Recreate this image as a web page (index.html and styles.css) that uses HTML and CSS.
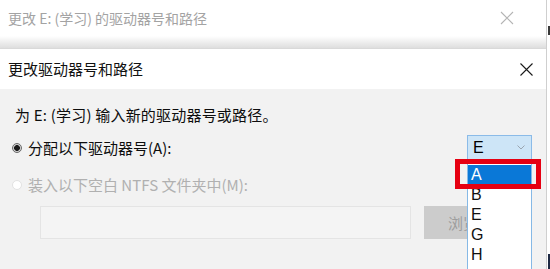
FILE: index.html
```html
<!DOCTYPE html>
<html lang="zh-CN">
<head>
<meta charset="utf-8">
<title>更改驱动器号和路径</title>
<link rel="stylesheet" href="styles.css">
</head>
<body>
<div class="screen">
  <div class="windows">
    <div class="back-bar">
      <span class="back-title">更改 E: (学习) 的驱动器号和路径</span>
      <svg class="x-icon" width="14" height="14" viewBox="0 0 14 14"><path d="M1 1L13 13M13 1L1 13" stroke="#b4b4b4" stroke-width="1.1" fill="none"/></svg>
    </div>
    <div class="band"></div>
    <div class="front">
      <div class="front-bar">
        <span class="front-title">更改驱动器号和路径</span>
        <svg class="x-icon" width="13" height="13" viewBox="0 0 13 13"><path d="M0.5 0.5L12.5 12.5M12.5 0.5L0.5 12.5" stroke="#1a1a1a" stroke-width="1.1" fill="none"/></svg>
      </div>
      <div class="front-body">
        <p class="intro">为 E: (学习) 输入新的驱动器号或路径。</p>
        <div class="row-assign">
          <label class="opt"><span class="radio checked"></span>分配以下驱动器号(A):</label>
          <div class="combo">
            <span class="combo-value">E</span>
            <svg width="8" height="5" viewBox="0 0 8 5"><path d="M0.5 0.5L4 4L7.5 0.5" stroke="#9aa5b0" stroke-width="1" fill="none"/></svg>
          </div>
        </div>
        <label class="opt disabled row-mount"><span class="radio"></span>装入以下空白 NTFS 文件夹中(M):</label>
        <div class="row-path">
          <div class="path-box"></div>
          <div class="browse">浏览(B)...</div>
        </div>
      </div>
    </div>
  </div>
  <div class="edge"><span class="mark-top"></span><span class="mark-bottom"></span></div>

  <ul class="dropdown">
    <li class="sel">A</li>
    <li>B</li>
    <li>E</li>
    <li>G</li>
    <li>H</li>
  </ul>
  <div class="highlight-box"></div>
</div>
</body>
</html>
```
FILE: styles.css
```css
html, body {
  margin: 0;
  padding: 0;
  background: #ffffff;
}
body {
  font-family: "Noto Sans CJK SC", "Noto Sans", "Liberation Sans", sans-serif;
  font-size: 15px;
  color: #1a1a1a;
}
.screen {
  position: relative;
  display: flex;
  width: 550px;
  height: 269px;
  overflow: hidden;
}
.windows {
  flex: none;
  width: 546px;
  display: flex;
  flex-direction: column;
}
.edge {
  position: relative;
  flex: 1;
  border-left: 1px solid #cfcfcf;
  background: #ffffff;
}
.mark-top {
  position: absolute;
  left: 1px;
  top: 26px;
  width: 2px;
  height: 9px;
  background: #3a3a3a;
}
.mark-bottom {
  position: absolute;
  left: 1px;
  top: 254px;
  width: 2px;
  height: 15px;
  background: #1f2a44;
}
.back-bar {
  height: 36px;
  display: flex;
  align-items: center;
  justify-content: space-between;
  padding: 0 32px 0 8px;
  background: #ffffff;
}
.back-title {
  font-size: 14px;
  color: #a3a3a3;
  line-height: 20px;
}
.band {
  height: 12px;
  background: linear-gradient(to bottom, #ffffff 0%, #f0f0f0 45%, #dedede 100%);
  border-bottom: 1px solid #d9d9d9;
}
.front {
  flex: 1;
  display: flex;
  flex-direction: column;
}
.front-bar {
  height: 40px;
  display: flex;
  align-items: center;
  justify-content: space-between;
  padding: 0 13px 0 8px;
  background: #ffffff;
}
.front-title {
  font-size: 15px;
  line-height: 20px;
  color: #111111;
}
.front-body {
  flex: 1;
  background: #f2f2f2;
  padding: 0 14px 0 12px;
}
.intro {
  margin: 16px 0 0 3px;
  line-height: 20px;
  color: #0d0d0d;
  letter-spacing: 0.2px;
}
.row-assign {
  margin-top: 10px;
  height: 25px;
  display: flex;
  align-items: center;
  justify-content: space-between;
}
.opt {
  display: flex;
  align-items: center;
  gap: 6px;
  line-height: 20px;
  color: #0d0d0d;
}
.radio {
  width: 10px;
  height: 10px;
  border-radius: 50%;
  box-sizing: border-box;
  border: 1px solid #e2e2e2;
  background: #ffffff;
}
.radio.checked {
  border: 1px solid #6a6a6a;
  background: radial-gradient(circle, #1a1a1a 0 2.6px, #d0d0d0 3.2px);
}
.opt.disabled {
  color: #b0b0b0;
}
.row-mount {
  margin-top: 15px;
}
.combo {
  width: 65px;
  height: 25px;
  box-sizing: border-box;
  border: 1px solid #8bbbe8;
  background: #cde5f7;
  display: flex;
  align-items: center;
  justify-content: space-between;
  padding: 0 6px 0 5px;
  color: #000000;
}
.combo-value {
  font-family: "Liberation Sans", "Noto Sans", sans-serif;
  font-size: 16px;
  line-height: 20px;
}
.row-path {
  margin-top: 11px;
  display: flex;
  gap: 13px;
  padding-left: 28px;
}
.path-box {
  width: 371px;
  height: 33px;
  box-sizing: border-box;
  border: 1px solid #e4e4e4;
  background: #f4f4f4;
}
.browse {
  width: 75px;
  height: 33px;
  background: #cccccc;
  color: #9d9d9d;
  display: flex;
  align-items: center;
  padding-left: 24px;
  box-sizing: border-box;
  white-space: nowrap;
}
.dropdown {
  position: absolute;
  left: 467px;
  top: 160px;
  width: 65px;
  height: 120px;
  box-sizing: border-box;
  margin: 0;
  padding: 5px 0 0 0;
  list-style: none;
  background: #ffffff;
  border: 1px solid #86b9e6;
  border-top: none;
  font-family: "Liberation Sans", "Noto Sans", sans-serif;
  font-size: 16px;
}
.dropdown li {
  height: 20px;
  line-height: 20px;
  padding-left: 3px;
  color: #111111;
}
.dropdown li.sel {
  height: 19px;
  line-height: 19px;
  margin-bottom: 1px;
  background: #0a78d7;
  color: #ffffff;
}
.highlight-box {
  position: absolute;
  left: 455px;
  top: 159px;
  width: 86px;
  height: 30px;
  box-sizing: border-box;
  border: 5px solid #e60012;
}
```
